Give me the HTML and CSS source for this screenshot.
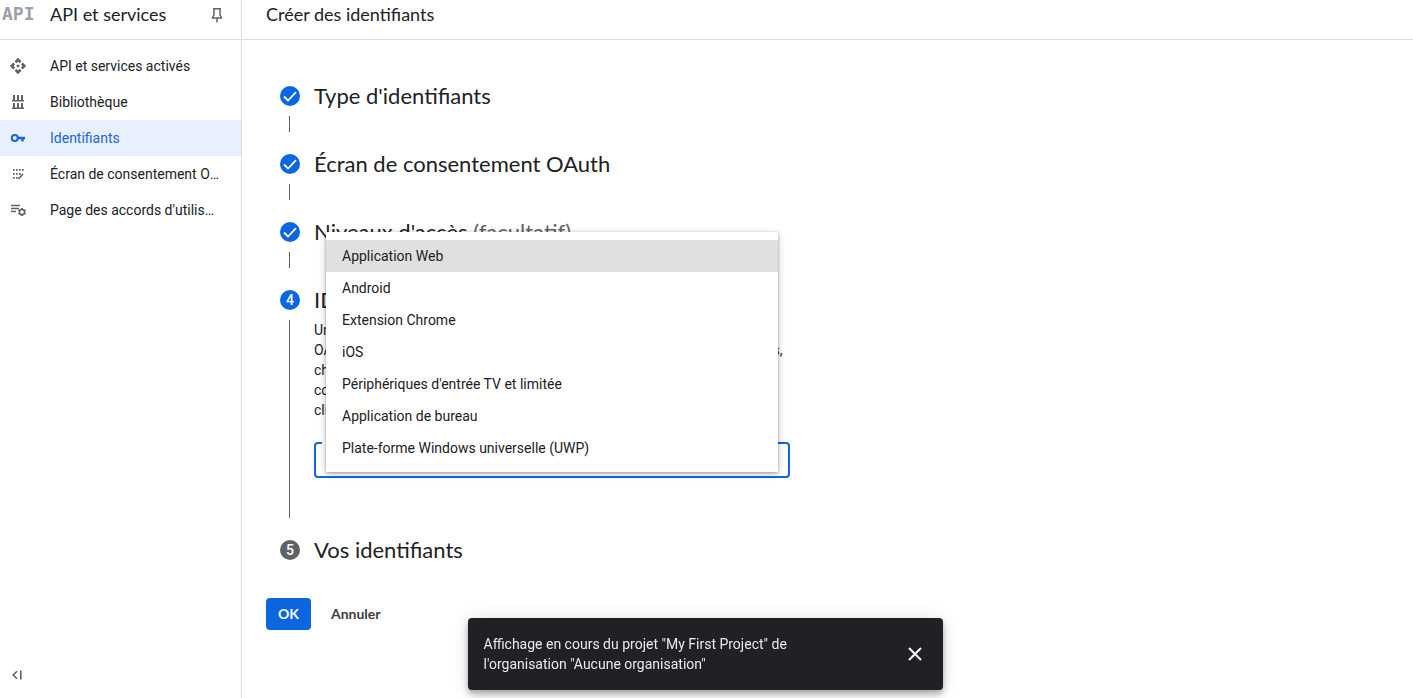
FILE: index.html
```html
<!DOCTYPE html>
<html lang="fr">
<head>
<meta charset="utf-8">
<title>Créer des identifiants</title>
<meta name="viewport" content="width=device-width, initial-scale=1">
<link rel="stylesheet" href="styles.css">
</head>
<body>
<div class="app">
  <aside class="sidebar">
    <div class="bar sidebar-head">
      <span class="logo" aria-hidden="true">API</span>
      <h2 class="bar-title">API et services</h2>
      <button class="icon-button" type="button" aria-label="Épingler">
        <svg width="20" height="20" viewBox="0 0 20 20" fill="none" stroke="currentColor" stroke-width="1.500"><path d="M6 4.800h8M7 4.800v6L5.500 14h9L13 10.800v-6M10 14v4.500"/></svg>
      </button>
    </div>
    <nav class="nav">
      <a class="nav-item" href="#">
        <svg width="20" height="20" viewBox="-1.500 -1.500 27 27" fill="currentColor"><path d="M14.500 12l-2.500 2.500-2.500-2.500 2.500-2.500 2.500 2.500zm-2.500-6l2.120 2.120 2.500-2.500L12 1 7.380 5.620l2.500 2.500L12 6zm-6 6l2.120-2.120-2.500-2.500L1 12l4.620 4.620 2.500-2.500L6 12zm12 0l-2.120 2.120 2.500 2.500L23 12l-4.620-4.620-2.500 2.500L18 12zm-6 6l-2.120-2.120-2.500 2.500L12 23l4.620-4.620-2.500-2.500L12 18z"/></svg>
        <span class="nav-label">API et services activés</span>
      </a>
      <a class="nav-item" href="#">
        <svg width="20" height="20" viewBox="0 0 20 20" fill="currentColor"><path d="M4 8h12v1.500H4zM4 15.500h12V17H4zM5 3h2v5H5zM9 3h2v5H9zM13 3h2v5h-2zM5 11h2v5H5zM9 11h2v5H9zM13 11h2v5h-2z"/></svg>
        <span class="nav-label">Bibliothèque</span>
      </a>
      <a class="nav-item active" href="#" aria-current="page">
        <svg width="20" height="20" viewBox="0 0 20 20" fill="none" stroke="currentColor" stroke-width="2"><circle cx="6.800" cy="10" r="3"/><path d="M9.800 10h7.200M14.500 10v3.500" stroke-width="2.400"/></svg>
        <span class="nav-label">Identifiants</span>
      </a>
      <a class="nav-item" href="#">
        <svg width="20" height="20" viewBox="0 0 20 20" fill="currentColor"><path d="M5 5h1.700v1.700H5zM8 5h1.700v1.700H8zM11 5h1.700v1.700H11zM14 5h1.700v1.700H14zM5 9h1.700v1.700H5zM8 9h1.700v1.700H8zM11 9h1.700v1.700H11zM5 13h1.700v1.700H5zM8 13h1.700v1.700H8z"/><path d="M10.500 15l4.500-5" stroke="currentColor" stroke-width="1.600"/></svg>
        <span class="nav-label">Écran de consentement OAuth</span>
      </a>
      <a class="nav-item" href="#">
        <svg width="20" height="20" viewBox="0 0 20 20" fill="none" stroke="currentColor" stroke-width="1.500"><path d="M3 5.500h9M3 8.500h8M3 11.500h5"/><circle cx="14" cy="12" r="2.600"/><path d="M14 8v1.500M14 14.500V16M10.500 10l1.300.8M16.200 13.200l1.300.8M10.500 14l1.300-.8M16.200 10.800l1.300-.8" stroke-width="1.900"/></svg>
        <span class="nav-label">Page des accords d'utilisation</span>
      </a>
    </nav>
    <button class="icon-button collapse" type="button" aria-label="Réduire le menu">
      <svg width="18" height="18" viewBox="0 0 18 18" fill="none" stroke="currentColor" stroke-width="1.600"><path d="M9 5.200L5.200 9 9 12.800M12.800 4.500v9"/></svg>
    </button>
  </aside>

  <main class="main">
    <header class="bar main-head"><h1 class="bar-title">Créer des identifiants</h1></header>
    <form class="form">
      <ol class="steps">
        <li class="step">
          <span class="badge"><svg width="20" height="20" viewBox="0 0 20 20" fill="none" stroke="currentColor" stroke-width="1.800"><path d="M4 10.500l4 4 8-8.300"/></svg></span>
          <h3 class="step-title">Type d'identifiants</h3>
          <div class="step-line"></div>
        </li>
        <li class="step">
          <span class="badge"><svg width="20" height="20" viewBox="0 0 20 20" fill="none" stroke="currentColor" stroke-width="1.800"><path d="M4 10.500l4 4 8-8.300"/></svg></span>
          <h3 class="step-title">Écran de consentement OAuth</h3>
          <div class="step-line"></div>
        </li>
        <li class="step">
          <span class="badge"><svg width="20" height="20" viewBox="0 0 20 20" fill="none" stroke="currentColor" stroke-width="1.800"><path d="M4 10.500l4 4 8-8.300"/></svg></span>
          <h3 class="step-title">Niveaux d'accès <span class="optional">(facultatif)</span></h3>
          <div class="step-line"></div>
        </li>
        <li class="step">
          <span class="badge">4</span>
          <h3 class="step-title">ID client OAuth</h3>
          <div class="step-line"></div>
          <div class="step-body">
            <p class="help">Un ID client permet d'identifier une application unique auprès des serveurs<br>OAuth de Google. Si votre application s'exécute sur plusieurs plates-formes,<br>chacune d'elles doit posséder son propre ID client. Pour en savoir plus,<br>consultez la page Configurer OAuth 2.0. <a href="#">En savoir plus sur chaque type de</a><br>clients OAuth</p>
            <div class="field">
              <label class="field-label" for="app-type">Type d'application *</label>
              <select class="field-select" id="app-type"><option>Application Web</option></select>
              <ul class="menu" role="listbox" aria-label="Type d'application">
                <li class="option selected" role="option" aria-selected="true">Application Web</li>
                <li class="option" role="option">Android</li>
                <li class="option" role="option">Extension Chrome</li>
                <li class="option" role="option">iOS</li>
                <li class="option" role="option">Périphériques d'entrée TV et limitée</li>
                <li class="option" role="option">Application de bureau</li>
                <li class="option" role="option">Plate-forme Windows universelle (UWP)</li>
              </ul>
            </div>
          </div>
        </li>
        <li class="step">
          <span class="badge pending">5</span>
          <h3 class="step-title">Vos identifiants</h3>
        </li>
      </ol>
      <div class="actions">
        <button class="button primary" type="button">OK</button>
        <button class="button" type="button">Annuler</button>
      </div>
    </form>
  </main>
</div>

<div class="toast" role="status">
  <p class="toast-text">Affichage en cours du projet "My First Project" de l'organisation "Aucune organisation"</p>
  <button class="icon-button toast-close" type="button" aria-label="Fermer">
    <svg width="24" height="24" viewBox="0 0 24 24" fill="none" stroke="currentColor" stroke-width="2"><path d="M6 6l12 12M18 6L6 18"/></svg>
  </button>
</div>
</body>
</html>
```
FILE: styles.css
```css
:root {
  --blue: #0b66e0;
  --ink: #202124;
  --muted: #5f6368;
  --line: #dadce0;
  --display: "Google Sans", Lato, sans-serif;
}

* { box-sizing: border-box; }

body {
  margin: 0;
  background: #fff;
  color: var(--ink);
  font: 14px/20px Roboto, sans-serif;
}

h1, h2, h3, p, ul, ol { margin: 0; padding: 0; font-weight: 400; }
ol, ul { list-style: none; }
svg { display: block; flex: none; }

.app { display: flex; min-height: 100vh; }

.sidebar {
  display: flex;
  flex-direction: column;
  flex: none;
  width: 242px;
  border-right: 1px solid var(--line);
}

.main { flex: 1; min-width: 0; }

.bar {
  display: flex;
  align-items: center;
  height: 40px;
  padding-bottom: 12px;
  border-bottom: 1px solid var(--line);
}

.bar-title { font: 400 18px/24px var(--display); }
.sidebar-head { padding-right: 14px; padding-left: 2px; }
.sidebar-head .bar-title { flex: 1; }
.main-head { padding-left: 24px; }

.logo {
  width: 48px;
  color: #9aa0a6;
  font: 700 18px/24px "DejaVu Sans Mono", monospace;
}

.icon-button {
  display: flex;
  padding: 0;
  border: 0;
  background: none;
  color: var(--muted);
  cursor: pointer;
}

.nav { flex: 1; padding-top: 8px; }

.nav-item {
  display: flex;
  align-items: center;
  gap: 22px;
  height: 36px;
  padding: 0 20px 0 8px;
  color: var(--ink);
  text-decoration: none;
}

.nav-item svg { color: var(--muted); }
.nav-item.active, .nav-item.active svg { color: #1967d2; }
.nav-item.active { background: #e8f0fe; }

.nav-label {
  overflow: hidden;
  text-overflow: ellipsis;
  white-space: nowrap;
}

.collapse { padding: 0 8px 14px; }

.form { padding: 36px 24px 0; }
.steps { padding-left: 14px; }

.step {
  display: grid;
  grid-template-columns: 20px minmax(0, 476px);
  grid-template-rows: 40px auto;
  column-gap: 14px;
  align-items: center;
  margin-bottom: 12px;
}

.badge {
  display: flex;
  align-items: center;
  justify-content: center;
  height: 20px;
  border-radius: 50%;
  background: var(--blue);
  color: #fff;
  font-weight: 500;
}

.badge.pending { background: var(--muted); }
.step-title { font: 400 22px/28px var(--display); }
.optional { color: var(--muted); }

.step-line {
  grid-row: 2;
  align-self: stretch;
  width: 1px;
  min-height: 16px;
  margin-left: 9px;
  background: var(--muted);
}

.step-body { padding-bottom: 40px; }
.help { margin-bottom: 22px; white-space: nowrap; }
.help a { color: #1967d2; text-decoration: none; }

.field { position: relative; }

.field-label {
  position: absolute;
  top: -8px;
  left: 8px;
  padding: 0 4px;
  background: #fff;
  color: var(--blue);
  font-size: 12px;
  line-height: 16px;
}

.field-select {
  display: block;
  width: 100%;
  height: 36px;
  padding: 0 12px;
  border: 2px solid var(--blue);
  border-radius: 4px;
  background: #fff;
  color: var(--ink);
  font: inherit;
  appearance: none;
}

.menu {
  position: absolute;
  right: 12px;
  bottom: 6px;
  left: 12px;
  padding: 8px 0;
  background: #fff;
  box-shadow: 0 1px 3px rgba(0, 0, 0, .3), 0 2px 8px rgba(0, 0, 0, .18);
}

.option { padding: 6px 16px; }
.option.selected { background: #e0e0e0; }

.actions { display: flex; gap: 8px; padding-top: 16px; }

.button {
  height: 32px;
  padding: 0 12px;
  border: 0;
  border-radius: 4px;
  background: none;
  color: #3c4043;
  font: 700 14px/20px var(--display);
  cursor: pointer;
}

.button.primary { background: var(--blue); color: #fff; }

.toast {
  position: fixed;
  bottom: 8px;
  left: 50%;
  display: flex;
  align-items: center;
  justify-content: space-between;
  width: 475px;
  max-width: 100%;
  margin-left: -239px;
  padding: 16px;
  border-radius: 4px;
  background: var(--ink);
  color: #e8eaed;
  box-shadow: 0 3px 5px rgba(0, 0, 0, .2), 0 6px 10px rgba(0, 0, 0, .14), 0 1px 18px rgba(0, 0, 0, .12);
}

.toast-text { max-width: 340px; }
.toast-close { color: #fff; }
```
